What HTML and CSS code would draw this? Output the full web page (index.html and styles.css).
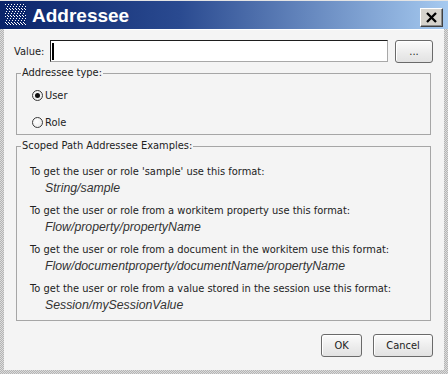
FILE: index.html
```html
<!DOCTYPE html>
<html>
<head>
<meta charset="utf-8">
<link rel="stylesheet" href="styles.css">
</head>
<body>
<div class="window">
  <div class="titlebar">
    <svg class="app-icon" width="21" height="21" viewBox="0 0 21 21" shape-rendering="crispEdges">
      <defs><clipPath id="c"><rect width="21" height="21"/></clipPath></defs>
      <rect width="21" height="21" fill="#0a246a"/>
      <g clip-path="url(#c)" stroke="#ffffff" stroke-width="1" stroke-dasharray="1.5 1">
        <line x1="-18" y1="0" x2="3" y2="21"/>
        <line x1="-15" y1="0" x2="6" y2="21"/>
        <line x1="-12" y1="0" x2="9" y2="21"/>
        <line x1="-9" y1="0" x2="12" y2="21"/>
        <line x1="-6" y1="0" x2="15" y2="21"/>
        <line x1="-3" y1="0" x2="18" y2="21"/>
        <line x1="0" y1="0" x2="21" y2="21"/>
        <line x1="3" y1="0" x2="24" y2="21"/>
        <line x1="6" y1="0" x2="27" y2="21"/>
        <line x1="9" y1="0" x2="30" y2="21"/>
        <line x1="12" y1="0" x2="33" y2="21"/>
        <line x1="15" y1="0" x2="36" y2="21"/>
        <line x1="18" y1="0" x2="39" y2="21"/>
      </g>
    </svg>
    <span class="title">Addressee</span>
    <span class="spacer"></span>
    <span class="close-btn">
      <svg width="11" height="11" viewBox="0 0 11 11">
        <path d="M1 1 L10 10 M10 1 L1 10" stroke="#000" stroke-width="2.3" fill="none"/>
      </svg>
    </span>
  </div>
  <div class="content">
    <div class="value-row">
      <span class="label">Value:</span>
      <div class="text-input"><span class="caret"></span></div>
      <div class="button dots">...</div>
    </div>
    <fieldset class="group type-group">
      <legend>Addressee type:</legend>
      <div class="radio-row"><span class="radio checked"></span><span>User</span></div>
      <div class="radio-row"><span class="radio"></span><span>Role</span></div>
    </fieldset>
    <fieldset class="group examples">
      <legend>Scoped Path Addressee Examples:</legend>
      <div class="example">
        <div class="line">To get the user or role 'sample' use this format:</div>
        <div class="line code">String/sample</div>
      </div>
      <div class="example">
        <div class="line">To get the user or role from a workitem property use this format:</div>
        <div class="line code">Flow/property/propertyName</div>
      </div>
      <div class="example">
        <div class="line">To get the user or role from a document in the workitem use this format:</div>
        <div class="line code">Flow/documentproperty/documentName/propertyName</div>
      </div>
      <div class="example">
        <div class="line">To get the user or role from a value stored in the session use this format:</div>
        <div class="line code">Session/mySessionValue</div>
      </div>
    </fieldset>
    <div class="actions">
      <div class="button ok">OK</div>
      <div class="button cancel">Cancel</div>
    </div>
  </div>
</div>
</body>
</html>
```
FILE: styles.css
```css
html, body {
  margin: 0;
  padding: 0;
  background: #ffffff;
}
body {
  font-family: "DejaVu Sans", sans-serif;
  font-size: 9.9px;
  color: #222222;
}
.window {
  width: 448px;
  height: 374px;
  box-sizing: border-box;
  display: flex;
  flex-direction: column;
  border-top: 1px solid #e4e4e4;
  background-color: #c9c9c9;
  background-image: repeating-conic-gradient(#dcdcdc 0 25%, #b4b4b4 0 50%);
  background-size: 2px 2px;
}
.titlebar {
  height: 28px;
  flex: none;
  display: flex;
  align-items: center;
  padding: 0 5px 0 5px;
  background: linear-gradient(to right, #0a246a 0%, #2a4a90 40%, #a6caf0 100%);
}
.app-icon {
  display: block;
  flex: none;
  margin-top: -1px;
}
.title {
  font-family: "Liberation Sans", Arial, sans-serif;
  font-weight: bold;
  font-size: 19px;
  color: #ffffff;
  margin-left: 6px;
  margin-top: 2px;
}
.spacer {
  flex: 1;
}
.close-btn {
  width: 23px;
  height: 19px;
  box-sizing: border-box;
  margin-top: 5px;
  display: flex;
  align-items: center;
  justify-content: center;
  background: #d6d3cc;
  border-top: 1px solid #ffffff;
  border-left: 1px solid #ffffff;
  border-right: 1px solid #404040;
  border-bottom: 1px solid #404040;
  box-shadow: inset -1px -1px 0 #8a8a8a;
}
.close-btn svg {
  display: block;
}
.content {
  flex: 1;
  margin: 0 4px 4px 4px;
  border-top: 1px solid #ffffff;
  background: #f4f4f4;
  padding: 10px 11px 0 10px;
  display: flex;
  flex-direction: column;
}
.value-row {
  display: flex;
  align-items: flex-start;
  height: 23px;
}
.label {
  line-height: 22px;
  margin-top: 1px;
  width: 36px;
  flex: none;
}
.text-input {
  width: 338px;
  height: 22px;
  box-sizing: border-box;
  flex: none;
  background: #ffffff;
  border-top: 1px solid #1e1e1e;
  border-left: 1px solid #1e1e1e;
  border-right: 1px solid #a8a8a8;
  border-bottom: 1px solid #a8a8a8;
  display: flex;
  align-items: center;
  padding-left: 1px;
}
.caret {
  width: 2px;
  height: 17px;
  background: #000000;
}
.button {
  box-sizing: border-box;
  height: 23px;
  border: 1px solid #6a6a6a;
  border-radius: 3px;
  background: linear-gradient(#fbfbfb, #ebebeb 60%, #e2e2e2);
  box-shadow: inset 1px 1px 0 #ffffff;
  display: flex;
  align-items: center;
  justify-content: center;
  color: #222222;
  flex: none;
}
.dots {
  width: 38px;
  margin-left: 7px;
  padding-bottom: 1px;
}
.group {
  margin: 0 2px;
  border: 1px solid #a6a6a6;
  padding: 0 4px;
}
.group legend {
  padding: 0 1px;
  line-height: 12px;
}
.type-group {
  margin-top: 4px;
  padding-top: 6px;
  padding-bottom: 2px;
}
.radio-row {
  display: flex;
  align-items: center;
  height: 20px;
  padding-left: 11px;
  gap: 2px;
}
.radio-row + .radio-row {
  margin-top: 7px;
}
.radio {
  width: 11px;
  height: 11px;
  box-sizing: border-box;
  border-radius: 50%;
  border: 1px solid #3a3a3a;
  background: radial-gradient(circle at 40% 40%, #ffffff, #e6e6e6);
  display: flex;
  align-items: center;
  justify-content: center;
}
.radio.checked::after {
  content: "";
  width: 5px;
  height: 5px;
  border-radius: 50%;
  background: #111111;
}
.examples {
  margin-top: 5px;
  padding-top: 11px;
  padding-bottom: 6px;
}
.example {
  padding-left: 9px;
}
.example + .example {
  margin-top: 5px;
}
.line {
  line-height: 17px;
  height: 17px;
  white-space: nowrap;
}
.line.code {
  font-family: "Liberation Sans", Arial, sans-serif;
  font-style: italic;
  font-size: 12.3px;
  color: #333333;
  padding-left: 15px;
}
.actions {
  display: flex;
  justify-content: flex-end;
  gap: 11px;
  margin-top: 13px;
}
.ok {
  width: 41px;
}
.cancel {
  width: 60px;
}
```
